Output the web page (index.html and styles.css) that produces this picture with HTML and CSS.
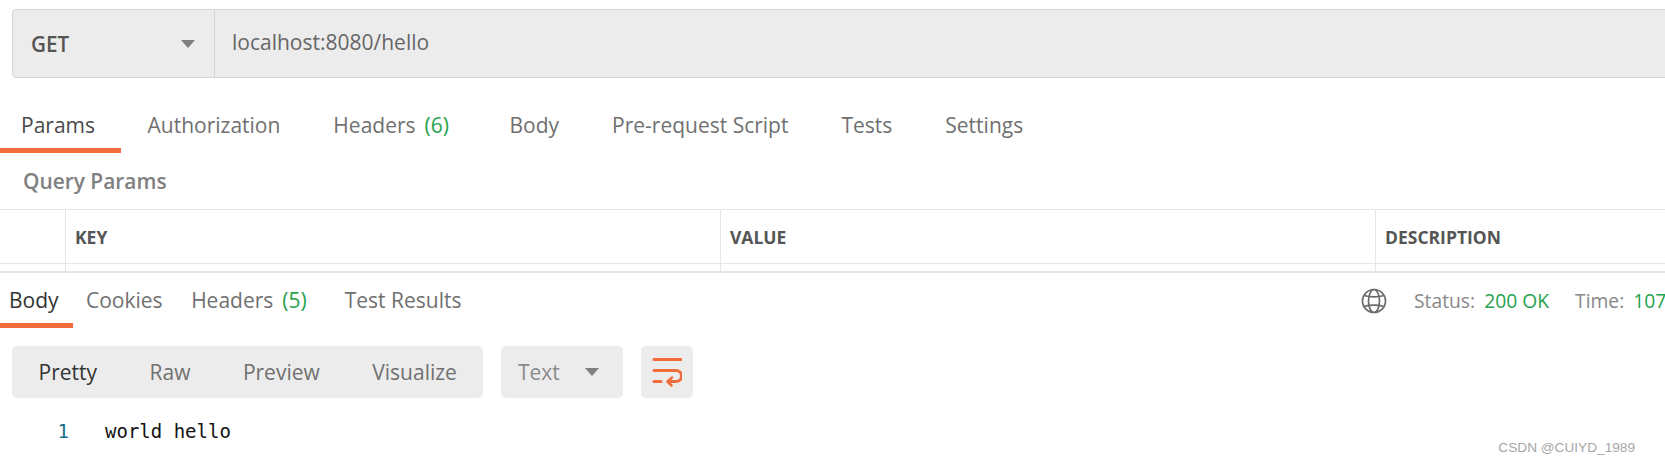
FILE: index.html
```html
<!DOCTYPE html>
<html lang="en">
<head>
<meta charset="utf-8">
<title>Request</title>
<link rel="stylesheet" href="styles.css">
</head>
<body>
<div class="page">
  <div class="urlbar">
    <div class="method"><span>GET</span><i class="caret"></i></div>
    <div class="url">localhost:8080/hello</div>
  </div>
  <nav class="req-tabs">
    <a class="rt active">Params</a>
    <a class="rt">Authorization</a>
    <a class="rt rt-count">Headers<b class="count">(6)</b></a>
    <a class="rt">Body</a>
    <a class="rt">Pre-request Script</a>
    <a class="rt">Tests</a>
    <a class="rt">Settings</a>
  </nav>
  <div class="qp">Query Params</div>
  <div class="ptable">
    <div class="phead">
      <div class="c0"></div>
      <div class="c1">KEY</div>
      <div class="c2">VALUE</div>
      <div class="c3">DESCRIPTION</div>
    </div>
    <div class="prow">
      <div class="c0"></div>
      <div class="c1"></div>
      <div class="c2"></div>
      <div class="c3"></div>
    </div>
  </div>
  <div class="res-bar">
    <nav class="res-tabs">
      <a class="st active">Body</a>
      <a class="st">Cookies</a>
      <a class="st">Headers<b class="count">(5)</b></a>
      <a class="st">Test Results</a>
    </nav>
    <div class="meta">
      <svg class="globe" width="26" height="26" viewBox="0 0 26 26" fill="none" stroke="#6b6b6b" stroke-width="1.7">
        <circle cx="13" cy="13" r="11.500"/>
        <ellipse cx="13" cy="13" rx="5.500" ry="11.500"/>
        <path d="M3.200 7.500C8 9.300 18 9.300 22.800 7.500M3.200 18.500C8 16.700 18 16.700 22.800 18.500"/>
      </svg>
      <span class="ml">Status:</span><span class="mv">200 OK</span>
      <span class="ml second">Time:</span><span class="mv">107</span>
    </div>
  </div>
  <div class="toolbar">
    <div class="modes">
      <span class="m on">Pretty</span>
      <span class="m">Raw</span>
      <span class="m">Preview</span>
      <span class="m">Visualize</span>
    </div>
    <div class="lang"><span>Text</span><i class="caret"></i></div>
    <div class="wrap">
      <svg width="30" height="30" viewBox="0 0 30 30" fill="none" stroke="#f26b3a" stroke-width="3" stroke-linecap="round" stroke-linejoin="round">
        <path d="M2 2.500h27"/>
        <path d="M2 13.500h22a5.500 5.500 0 0 1 0 11h-6"/>
        <path d="M2 24.500h7"/>
        <path d="M20 20.500l-4.500 4 4 4" stroke-width="2.500"/>
      </svg>
    </div>
  </div>
  <div class="code"><span class="ln">1</span><span class="txt">world hello</span></div>
  <div class="mark">CSDN @CUIYD_1989</div>
</div>
</body>
</html>
```

FILE: styles.css
```css
* { box-sizing: border-box; }
html, body { margin: 0; padding: 0; background: #fff; overflow: hidden; }
.page {
  position: relative;
  width: 1665px;
  height: 464px;
  overflow: hidden;
  font-family: "Open Sans", sans-serif;
  color: #6f6f6f;
}
.caret {
  display: block;
  width: 0;
  height: 0;
  border-left: 7px solid transparent;
  border-right: 7px solid transparent;
  border-top: 8px solid #808080;
}
.urlbar {
  display: flex;
  width: 1700px;
  height: 69px;
  margin: 9px 0 0 12px;
  background: #ececec;
  border: 1px solid #d6d6d6;
  border-radius: 4px;
}
.method {
  width: 202px;
  flex: none;
  display: flex;
  align-items: center;
  justify-content: space-between;
  padding: 0 19px 0 18px;
  border-right: 1px solid #d6d6d6;
  font-size: 20.700px;
  font-weight: 600;
  color: #555;
}
.url {
  padding-left: 17px;
  font-size: 21px;
  line-height: 64px;
  color: #666;
}
.req-tabs {
  display: flex;
  height: 57px;
  margin-top: 18px;
}
.rt {
  display: block;
  height: 57px;
  padding: 0 26.500px 0 0;
  margin-left: 26.500px;
  font-size: 21px;
  line-height: 58px;
  color: #707070;
  white-space: nowrap;
}
.rt.active {
  color: #4a4a4a;
  border-bottom: 5px solid #f26b3a;
  width: 121px;
  margin: 0;
  padding: 0 0 0 21px;
}
.rt-count { padding-right: 34px; }
.count { font-weight: 400; color: #27a24f; margin-left: 9px; }
.qp {
  height: 56px;
  padding-left: 23px;
  font-size: 20.900px;
  font-weight: 600;
  line-height: 57px;
  color: #808080;
}
.ptable { height: 62px; border-top: 1px solid #e6e6e6; }
.phead, .prow { display: grid; grid-template-columns: 65px 655px 655px 1fr; }
.phead {
  height: 54px;
  border-bottom: 1px solid #e6e6e6;
  font-size: 17.500px;
  font-weight: 700;
  line-height: 55px;
  color: #555;
}
.prow { height: 7px; }
.c1, .c2, .c3 { padding-left: 9px; border-left: 1px solid #e6e6e6; }
.res-bar {
  display: flex;
  justify-content: space-between;
  height: 57px;
  border-top: 2px solid #e4e4e4;
}
.res-tabs { display: flex; }
.st {
  display: block;
  height: 55px;
  padding: 0 9px;
  margin-right: 10px;
  font-size: 21px;
  line-height: 55px;
  color: #707070;
  white-space: nowrap;
}
.st.active {
  width: 73px;
  margin-right: 4px;
  color: #333;
  border-bottom: 5px solid #f26b3a;
}
.st:nth-child(2) { margin-right: 10.500px; }
.st:nth-child(3) { margin-right: 20px; }
.meta {
  display: flex;
  align-items: center;
  width: 304px;
  flex: none;
  height: 55px;
  white-space: nowrap;
  font-size: 19.300px;
  color: #888;
}
.globe { margin-right: 27px; flex: none; }
.ml { margin-right: 9px; }
.mv { color: #27a24f; }
.second { margin-left: 26px; }
.toolbar {
  display: flex;
  gap: 18px;
  height: 52px;
  margin: 18px 0 0 12px;
}
.modes, .lang, .wrap { background: #ececec; border-radius: 5px; }
.modes { display: flex; align-items: center; width: 471px; padding-left: 26.500px; gap: 52.500px; }
.m { font-size: 21px; color: #707070; }
.m.on { color: #333; }
.lang {
  display: flex;
  align-items: center;
  justify-content: space-between;
  width: 122px;
  padding: 0 24px 0 17px;
  font-size: 21px;
  color: #8a8a8a;
}
.wrap { display: flex; align-items: center; justify-content: center; width: 52px; }
.code {
  display: flex;
  margin-top: 21px;
  font-family: "DejaVu Sans Mono", monospace;
  font-size: 19px;
  line-height: 24px;
  color: #111;
}
.ln { width: 69px; text-align: right; color: #1a6f8a; flex: none; }
.txt { margin-left: 36px; }
.mark {
  position: absolute;
  right: 30px;
  bottom: 9px;
  font-family: "Liberation Sans", sans-serif;
  font-size: 13.650px;
  color: #a6a6a6;
}
```
